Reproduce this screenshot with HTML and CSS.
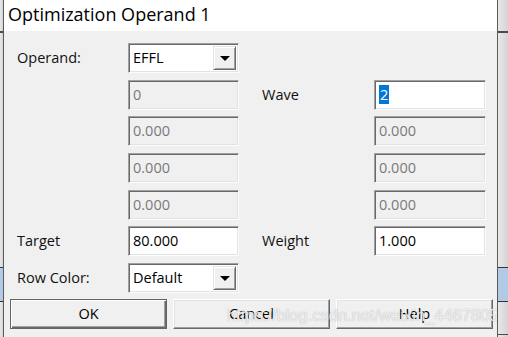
FILE: index.html
```html
<!DOCTYPE html>
<html>
<head>
<meta charset="utf-8">
<link rel="stylesheet" href="styles.css">
</head>
<body>
<div class="screen">
  <div class="bg bg-left"><div class="bg-line"></div><div class="bg-blue"></div></div>
  <div class="dialog">
    <div class="titlebar">Optimization Operand 1</div>
    <div class="content">
      <div class="form">
        <div class="label">Operand:</div>
        <div class="combo"><span class="val">EFFL</span><span class="drop"><span class="tri"></span></span></div>
        <div></div><div></div>

        <div></div>
        <div class="field disabled">0</div>
        <div class="label label-right">Wave</div>
        <div class="field"><span class="sel">2</span></div>

        <div></div>
        <div class="field disabled">0.000</div>
        <div></div>
        <div class="field disabled">0.000</div>

        <div></div>
        <div class="field disabled">0.000</div>
        <div></div>
        <div class="field disabled">0.000</div>

        <div></div>
        <div class="field disabled">0.000</div>
        <div></div>
        <div class="field disabled">0.000</div>

        <div class="label">Target</div>
        <div class="field">80.000</div>
        <div class="label label-right">Weight</div>
        <div class="field">1.000</div>

        <div class="label">Row Color:</div>
        <div class="combo"><span class="val">Default</span><span class="drop"><span class="tri"></span></span></div>
        <div></div><div></div>
      </div>
      <div class="buttons">
        <div class="btn btn-default">OK</div>
        <div class="btn">Cancel</div>
        <div class="btn">Help</div>
      </div>
      <div class="watermark">https://blog.csdn.net/weixin_44678052</div>
    </div>
  </div>
  <div class="bg bg-right"><div class="bg-line"></div><div class="bg-blue"></div><div class="bg-line bg-line-bottom"></div></div>
</div>
</body>
</html>
```
FILE: styles.css
```css
html, body {
  margin: 0;
  padding: 0;
}
body {
  width: 508px;
  height: 337px;
  overflow: hidden;
  font-family: "Open Sans", "Liberation Sans", sans-serif;
  background: #f0f0f0;
}
.screen {
  display: flex;
  width: 508px;
  height: 337px;
}
.bg {
  position: relative;
  background: linear-gradient(to right, #e8e8e8, #d4d4d4);
}
.bg-left {
  width: 4px;
  border-right: 1px solid #5a5a5a;
  box-sizing: border-box;
}
.bg-right {
  width: 11px;
  border-left: 1px solid #5a5a5a;
  box-sizing: border-box;
}
.bg-line {
  position: absolute;
  left: 0;
  right: 0;
  top: 31px;
  height: 2px;
  background: #4a4a4a;
}
.bg-line-bottom {
  top: 334px;
  height: 1px;
}
.bg-blue {
  position: absolute;
  left: 0;
  right: 0;
  top: 267px;
  height: 33px;
  background: #b1cbe6;
  border-top: 1px solid #333;
  border-bottom: 1px solid #333;
}
.dialog {
  width: 493px;
  display: flex;
  flex-direction: column;
  background: #f0f0f0;
}
.titlebar {
  height: 31px;
  background: #fff;
  font-size: 18px;
  line-height: 29px;
  padding-left: 4px;
  color: #000;
}
.content {
  position: relative;
  flex: 1;
  padding: 12px 0 0 6px;
}
.form {
  display: grid;
  grid-template-columns: 118px 111px 135px 112px;
  grid-auto-rows: 30px;
  row-gap: 6.67px;
}
.label {
  font-size: 14.5px;
  color: #111;
  padding-left: 7px;
  line-height: 30px;
}
.label-right {
  padding-left: 23px;
}
.field, .combo {
  box-sizing: border-box;
  height: 30px;
  border-style: solid;
  border-width: 1px;
  border-color: #a0a0a0 #fcfcfc #fcfcfc #a0a0a0;
  box-shadow: inset 1px 1px 0 #696969, inset -1px -1px 0 #e3e3e3;
  background: #fff;
  font-size: 14.5px;
  line-height: 27px;
  padding-left: 4px;
  color: #000;
}
.field.disabled {
  background: #f0f0f0;
  color: #7a7a7a;
}
.sel {
  background: #0078d7;
  color: #fff;
  padding: 0 1px;
}
.combo {
  display: flex;
  align-items: stretch;
  padding: 2px 2px 2px 4px;
  line-height: 24px;
}
.combo .val {
  flex: 1;
}
.drop {
  width: 23px;
  box-sizing: border-box;
  background: #f0f0f0;
  border-style: solid;
  border-width: 1px;
  border-color: #e3e3e3 #696969 #696969 #e3e3e3;
  box-shadow: inset 1px 1px 0 #fff, inset -1px -1px 0 #a0a0a0;
  display: flex;
  align-items: center;
  justify-content: center;
}
.tri {
  width: 0;
  height: 0;
  border-left: 5px solid transparent;
  border-right: 5px solid transparent;
  border-top: 5px solid #000;
  margin-top: 1px;
}
.buttons {
  display: grid;
  grid-template-columns: 157px 157px 157px;
  column-gap: 6px;
  margin-top: 6px;
}
.btn {
  box-sizing: border-box;
  height: 30px;
  border-style: solid;
  border-width: 1px;
  border-color: #fff #696969 #696969 #fff;
  box-shadow: inset -1px -1px 0 #a0a0a0, inset 1px 1px 0 #e3e3e3;
  background: #f0f0f0;
  text-align: center;
  font-size: 14.5px;
  line-height: 27px;
  color: #000;
}
.btn-default {
  border: 1px solid #646464;
  box-shadow: inset 1px 1px 0 #fff, inset -1px -1px 0 #696969, inset -2px -2px 0 #a0a0a0;
}
.watermark {
  position: absolute;
  left: 223px;
  top: 275px;
  font-family: "Liberation Sans", sans-serif;
  font-size: 16.5px;
  color: rgba(250, 250, 250, 0.85);
  text-shadow: 0 0 1px rgba(110, 110, 110, 0.6);
  white-space: nowrap;
  pointer-events: none;
}
```
